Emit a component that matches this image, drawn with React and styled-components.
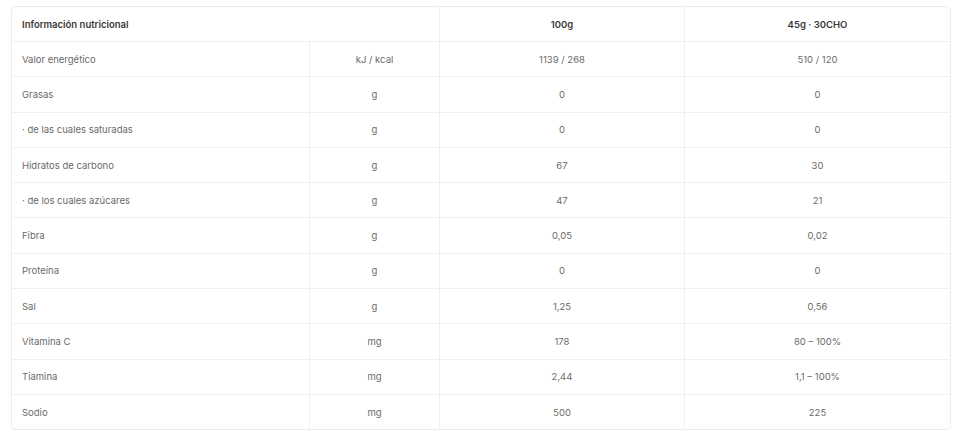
import React from 'react'
import styled, { createGlobalStyle } from 'styled-components'

const rows = [
  ['Valor energético', 'kJ / kcal', '1139 / 268', '510 / 120'],
  ['Grasas', 'g', '0', '0'],
  ['· de las cuales saturadas', 'g', '0', '0'],
  ['Hidratos de carbono', 'g', '67', '30'],
  ['· de los cuales azúcares', 'g', '47', '21'],
  ['Fibra', 'g', '0,05', '0,02'],
  ['Proteína', 'g', '0', '0'],
  ['Sal', 'g', '1,25', '0,56'],
  ['Vitamina C', 'mg', '178', '80 – 100%'],
  ['Tiamina', 'mg', '2,44', '1,1 – 100%'],
  ['Sodio', 'mg', '500', '225'],
]

const App = () => {
  return (
    <>
      <GlobalStyle />
      <Page>
        <Table>
          <colgroup>
            <col style={{ width: 297 }} />
            <col style={{ width: 130 }} />
            <col style={{ width: 245 }} />
            <col />
          </colgroup>
          <thead>
            <tr>
              <Head colSpan={2}>Información nutricional</Head>
              <Head center>100g</Head>
              <Head center>45g · 30CHO</Head>
            </tr>
          </thead>
          <tbody>
            {rows.map((r) => (
              <tr key={r[0]}>
                <Cell>{r[0]}</Cell>
                <Cell center>{r[1]}</Cell>
                <Cell center>{r[2]}</Cell>
                <Cell center>{r[3]}</Cell>
              </tr>
            ))}
          </tbody>
        </Table>
      </Page>
    </>
  )
}

const GlobalStyle = createGlobalStyle`
  body {
    margin: 0;
    background: #ffffff;
    font-family: 'Inter', 'Liberation Sans', sans-serif;
  }
`

const Page = styled.div`
  padding: 6px 9px 0 11px;
`

const Table = styled.table`
  width: 940px;
  border-collapse: separate;
  border-spacing: 0;
  table-layout: fixed;
  border: 1px solid #ececec;
  border-radius: 4px;
  overflow: hidden;
`

const Head = styled.th`
  height: 34px;
  padding: 0 10px;
  font-size: 9.5px;
  font-weight: 600;
  color: #3a3a3a;
  text-align: ${(props) => (props.center ? 'center' : 'left')};
  border-left: ${(props) => (props.center ? '1px solid #efefef' : 'none')};
`

const Cell = styled.td`
  height: 34.3px;
  padding: 0 10px;
  font-size: 9.5px;
  font-weight: 400;
  color: #6a6a6a;
  text-align: ${(props) => (props.center ? 'center' : 'left')};
  border-top: 1px solid #efefef;
  border-left: ${(props) => (props.center ? '1px solid #efefef' : 'none')};
`

export default App
